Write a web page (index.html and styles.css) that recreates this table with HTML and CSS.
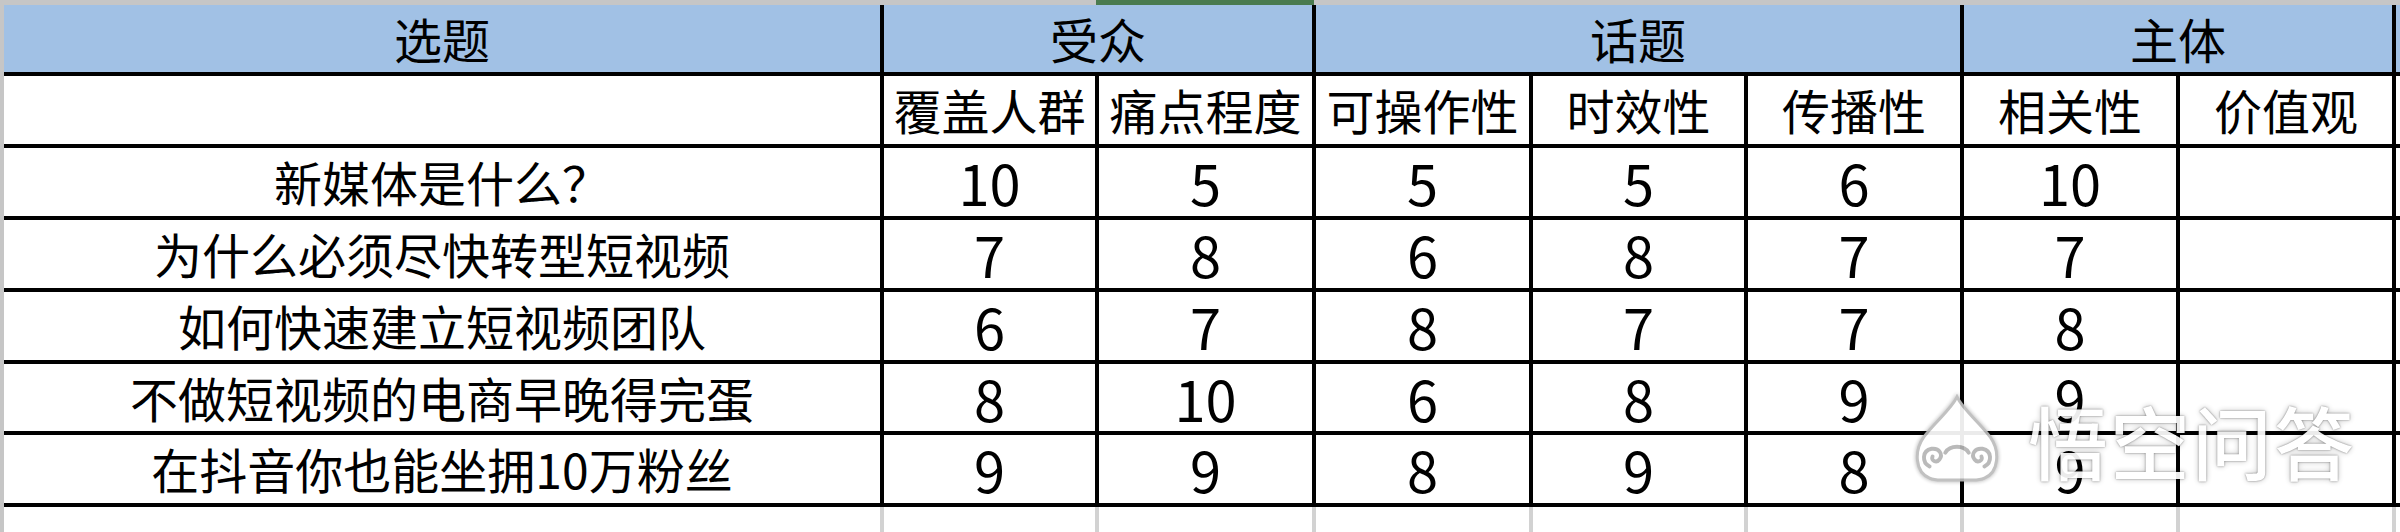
FILE: index.html
```html
<!DOCTYPE html>
<html lang="zh-CN">
<head>
<meta charset="utf-8">
<title>选题评分表</title>
<link rel="stylesheet" href="styles.css">
</head>
<body>
<div class="topbar"><div class="sel"></div></div>
<div class="sheet">
  <div class="grid">
    <div class="c h1">选题</div>
    <div class="c h1 s2">受众</div>
    <div class="c h1 s3">话题</div>
    <div class="c h1 s2">主体</div>
    <div class="c h1"></div>

    <div class="c"></div>
    <div class="c">覆盖人群</div>
    <div class="c">痛点程度</div>
    <div class="c">可操作性</div>
    <div class="c">时效性</div>
    <div class="c">传播性</div>
    <div class="c">相关性</div>
    <div class="c">价值观</div>
    <div class="c"></div>

    <div class="c">新媒体是什么？</div>
    <div class="c n">10</div><div class="c n">5</div><div class="c n">5</div><div class="c n">5</div><div class="c n">6</div><div class="c n">10</div><div class="c n"></div><div class="c"></div>

    <div class="c">为什么必须尽快转型短视频</div>
    <div class="c n">7</div><div class="c n">8</div><div class="c n">6</div><div class="c n">8</div><div class="c n">7</div><div class="c n">7</div><div class="c n"></div><div class="c"></div>

    <div class="c">如何快速建立短视频团队</div>
    <div class="c n">6</div><div class="c n">7</div><div class="c n">8</div><div class="c n">7</div><div class="c n">7</div><div class="c n">8</div><div class="c n"></div><div class="c"></div>

    <div class="c">不做短视频的电商早晚得完蛋</div>
    <div class="c n">8</div><div class="c n">10</div><div class="c n">6</div><div class="c n">8</div><div class="c n">9</div><div class="c n">9</div><div class="c n"></div><div class="c"></div>

    <div class="c">在抖音你也能坐拥10万粉丝</div>
    <div class="c n">9</div><div class="c n">9</div><div class="c n">8</div><div class="c n">9</div><div class="c n">8</div><div class="c n">9</div><div class="c n"></div><div class="c"></div>
  </div>
  <div class="tail">
    <div class="t"></div><div class="t"></div><div class="t"></div><div class="t"></div><div class="t"></div><div class="t"></div><div class="t"></div><div class="t"></div><div class="t"></div>
  </div>
  <div class="watermark">
    <svg class="logo" viewBox="0 0 96 92" width="94" height="90" aria-hidden="true">
      <path d="M48 3 C42 16 26 28 14 44 C4 58 5 80 20 86 C24 88 28 88 32 88 L64 88 C68 88 72 88 76 86 C91 80 92 58 82 44 C70 28 54 16 48 3 Z" fill="#fff" stroke="#bcbcbc" stroke-width="3"/>
      <path d="M20 74 C12 70 12 58 22 56 C30 55 34 62 30 67 C27 71 21 68 23 64" fill="none" stroke="#b5b5b5" stroke-width="4" stroke-linecap="round"/>
      <path d="M76 74 C84 70 84 58 74 56 C66 55 62 62 66 67 C69 71 75 68 73 64" fill="none" stroke="#b5b5b5" stroke-width="4" stroke-linecap="round"/>
      <path d="M36 60 C41 52 55 52 60 60" fill="none" stroke="#b5b5b5" stroke-width="4" stroke-linecap="round"/>
    </svg>
    <span class="wm-text">悟空问答</span>
  </div>
</div>
</body>
</html>
```

FILE: styles.css
```css
html, body {
  margin: 0;
  padding: 0;
}
body {
  width: 2400px;
  height: 532px;
  overflow: hidden;
  background: #c6c6c6;
  font-family: "Noto Sans CJK SC", "Noto Sans", sans-serif;
  color: #000;
}
.topbar {
  height: 5px;
  display: flex;
}
.sel {
  margin-left: 1096px;
  width: 218px;
  height: 5px;
  background: #4a7b4f;
}
.sheet {
  position: relative;
  padding-left: 4px;
}
.grid {
  display: grid;
  grid-template-columns: 876px 211px 213px 213px 211px 212px 212px 212px 1fr;
  grid-template-rows: 67px 68px 68px 68px 68px 67px 68px;
  gap: 4px;
  padding-bottom: 4px;
  background: #000;
}
.c {
  background: #fff;
  display: flex;
  align-items: center;
  justify-content: center;
  font-size: 48px;
  line-height: 1.2;
  white-space: nowrap;
  min-width: 0;
}
.h1 {
  background: #a1c1e5;
}
.s2 { grid-column: span 2; }
.s3 { grid-column: span 3; }
.n {
  font-size: 56px;
  line-height: 1.1;
}
.tail {
  display: grid;
  grid-template-columns: 876px 211px 213px 213px 211px 212px 212px 212px 1fr;
  column-gap: 4px;
  height: 25px;
  background: #d2d2d2;
}
.t {
  background: #fff;
}
.watermark {
  position: absolute;
  left: 1910px;
  top: 389px;
  display: flex;
  align-items: center;
  gap: 24px;
  opacity: 0.92;
}
.logo {
  display: block;
  filter: drop-shadow(0 0 2px rgba(0,0,0,0.35));
}
.wm-text {
  font-size: 80px;
  line-height: 1;
  letter-spacing: 2px;
  color: #fff;
  font-weight: 500;
  text-shadow: 0 0 2px rgba(0,0,0,0.55), 0 0 6px rgba(0,0,0,0.25);
}
```
